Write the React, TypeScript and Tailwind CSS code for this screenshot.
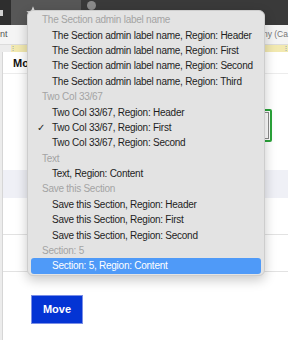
import React from "react";

type Row = { label: string; header?: boolean; checked?: boolean; active?: boolean };

const rows: Row[] = [
  { label: "The Section admin label name", header: true },
  { label: "The Section admin label name, Region: Header" },
  { label: "The Section admin label name, Region: First" },
  { label: "The Section admin label name, Region: Second" },
  { label: "The Section admin label name, Region: Third" },
  { label: "Two Col 33/67", header: true },
  { label: "Two Col 33/67, Region: Header" },
  { label: "Two Col 33/67, Region: First", checked: true },
  { label: "Two Col 33/67, Region: Second" },
  { label: "Text", header: true },
  { label: "Text, Region: Content" },
  { label: "Save this Section", header: true },
  { label: "Save this Section, Region: Header" },
  { label: "Save this Section, Region: First" },
  { label: "Save this Section, Region: Second" },
  { label: "Section: 5", header: true },
  { label: "Section: 5, Region: Content", active: true },
];

function Star() {
  return (
    <svg width="16" height="16" viewBox="0 0 24 24" className="fill-[#d8d8d8]">
      <path d="M12 2l2.9 6.9 7.1.6-5.4 4.7 1.7 7.3L12 17.6 5.7 21.5l1.7-7.3L2 9.5l7.1-.6z" />
    </svg>
  );
}

export default function App() {
  return (
    <div className="relative w-[300px] h-[352px] overflow-hidden bg-white font-['Liberation_Sans',Arial,sans-serif]">
      {/* page behind the menu */}
      <div className="w-[288px] flex flex-col">
        {/* toolbar */}
        <div className="h-[25px] flex bg-[#3a3a3a]">
          <div className="w-[11px] bg-[#2e2e2e] flex items-center">
            <div className="w-[3px] h-[6px] bg-[#cfcfcf]" />
          </div>
          <div className="w-[70px] bg-[#575757] flex items-center pl-[14px]">
            <Star />
          </div>
          <div className="flex-1 flex items-start pl-[6px] pt-[1px]">
            <div className="w-[9px] h-[9px] rounded-full bg-[#8a8a8a]" />
          </div>
        </div>
        {/* tab row */}
        <div className="h-[20px] flex items-center bg-[#f4f4f4] border-b border-[#dcdcdc] text-[9px] text-[#555]">
          <span>nt</span>
          <span className="ml-auto whitespace-nowrap text-[8.5px] text-[#777]">ny (Ca</span>
        </div>
        {/* yellow strip */}
        <div className="h-[7px] flex">
          <div className="w-[11px] bg-[#ececec]" />
          <div className="flex-1 bg-[#f2e9b0] flex items-center justify-between px-[1px] text-[7px] leading-none text-[#6d86b8]">
            <span>⁝</span>
            <span>⁝</span>
          </div>
        </div>
        {/* content */}
        <div className="flex h-[288px]">
          <div className="w-[3px] bg-[#ececec] border-r border-[#d6d6d6]" />
          <div className="flex-1 flex flex-col bg-white">
            <div className="h-[21px] mt-[1px] flex items-center pl-[10px] text-[11px] font-bold text-[#111] border-b border-[#ececec]">
              Mo
            </div>
            <div className="h-[35px]" />
            <div className="flex justify-end pr-[16px]">
              <div className="w-[60px] h-[33px] border-2 border-[#2aa43a] rounded-[2px] p-[1px]">
                <div className="w-full h-full border border-[#8c8c8c]" />
              </div>
            </div>
            <div className="h-[28px]" />
            <div className="h-[28px] bg-[#eff0f6]" />
            <div className="h-[37px] border-b border-[#e2e2e2]" />
            <div className="h-[37px] border-b border-[#e2e2e2]" />
            <div className="pl-[28px] pt-[23px]">
              <button className="w-[52px] h-[29px] bg-[#0434d4] border border-[#7a8ee6] text-white text-[11px] font-bold">
                Move
              </button>
            </div>
          </div>
        </div>
      </div>

      {/* open select menu */}
      <div className="absolute left-[27px] top-[10px] w-[238px] py-[1px] px-[3px] rounded-[6px] bg-[#e3e3e3] border border-[#cdcdcd] shadow-[0_4px_12px_rgba(0,0,0,0.22)] font-['Liberation_Sans',Arial,sans-serif] text-[10px] tracking-[-0.25px]">
        {rows.map((r, i) => (
          <div
            key={i}
            className={
              r.active
                ? "h-[15.4px] flex items-center rounded-[3px] bg-[#4f9af8] text-white pl-[21px]"
                : r.header
                ? "h-[15.4px] flex items-center text-[#a3a3a3] pl-[11px]"
                : "h-[15.4px] flex items-center text-[#1e1e1e] pl-[21px] relative"
            }
          >
            {r.checked && <span className="absolute left-[6px] text-[10px]">✓</span>}
            <span className="whitespace-nowrap">{r.label}</span>
          </div>
        ))}
      </div>
    </div>
  );
}
